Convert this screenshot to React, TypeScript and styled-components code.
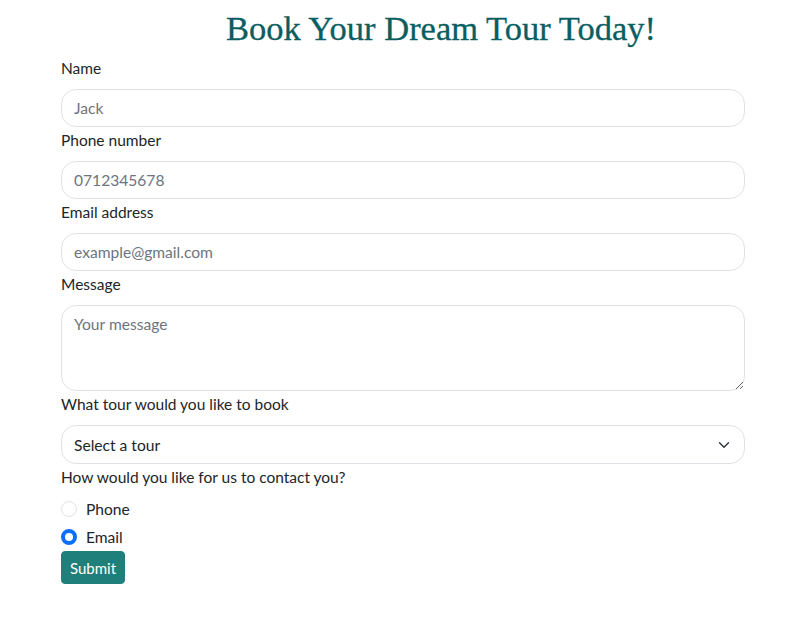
import React from "react";
import styled, { createGlobalStyle } from "styled-components";

const Global = createGlobalStyle`
  body {
    margin: 8px;
    background: #ffffff;
    font-family: Lato, "Noto Sans", sans-serif;
    color: #212529;
  }
  * { box-sizing: border-box; }
`;

const Page = styled.div`
  display: flex;
  flex-direction: column;
`;

const Title = styled.h1`
  margin: 0;
  padding-left: 91px;
  text-align: center;
  font-family: "Liberation Serif", "DejaVu Serif", serif;
  font-weight: 400;
  font-size: 34.5px;
  line-height: 40px;
  color: #0b5e5f;
  -webkit-text-stroke: 0.3px #0b5e5f;
`;

const Form = styled.form`
  margin: 8px 0 0 53px;
  width: 684px;
  display: flex;
  flex-direction: column;
`;

const Field = styled.div`
  display: flex;
  flex-direction: column;
  margin-bottom: 1px;
`;

const Label = styled.label`
  font-size: 15.5px;
  line-height: 24px;
  margin-bottom: 9px;
`;

const inputBase = `
  width: 100%;
  font-family: Lato, "Noto Sans", sans-serif;
  font-size: 15.6px;
  line-height: 24px;
  color: #212529;
  background: #fff;
  border: 1px solid #dee2e6;
  border-radius: 15px;
  padding: 6px 12px;
  outline: none;
  &::placeholder { color: #6c757d; opacity: 1; }
`;

const Input = styled.input`
  ${inputBase}
  height: 38px;
`;

const TextArea = styled.textarea`
  ${inputBase}
  height: 86px;
  resize: vertical;
  display: block;
`;

const Select = styled.select`
  ${inputBase}
  height: 39px;
  appearance: none;
  padding-right: 36px;
  background-image: url("data:image/svg+xml,%3csvg xmlns='http://www.w3.org/2000/svg' viewBox='0 0 16 16'%3e%3cpath fill='none' stroke='%23343a40' stroke-linecap='round' stroke-linejoin='round' stroke-width='2' d='m2 5 6 6 6-6'/%3e%3c/svg%3e");
  background-repeat: no-repeat;
  background-position: right 12px center;
  background-size: 16px 12px;
`;

const RadioGroup = styled.div`
  display: flex;
  flex-direction: column;
  gap: 4px;
  margin-top: -1px;
`;

const RadioRow = styled.label`
  display: flex;
  align-items: center;
  gap: 9px;
  font-size: 15.6px;
  line-height: 24px;
  cursor: pointer;
`;

const RadioDot = styled.span<{ $checked?: boolean }>`
  width: 16px;
  height: 16px;
  border-radius: 50%;
  flex: none;
  border: ${(p) => (p.$checked ? "4px solid #0d6efd" : "1px solid #dee2e6")};
  background: #fff;
`;

const Submit = styled.button`
  align-self: flex-start;
  margin-top: 1px;
  height: 33px;
  padding: 0 8px;
  background: #1f7f7b;
  color: #fff;
  border: 1px solid #1f7f7b;
  border-radius: 4px;
  font-family: Lato, "Noto Sans", sans-serif;
  font-size: 15px;
  cursor: pointer;
`;

export default function App() {
  const [contact, setContact] = React.useState("email");
  return (
    <Page>
      <Global />
      <Title>Book Your Dream Tour Today!</Title>
      <Form onSubmit={(e) => e.preventDefault()}>
        <Field>
          <Label>Name</Label>
          <Input placeholder="Jack" />
        </Field>
        <Field>
          <Label>Phone number</Label>
          <Input placeholder="0712345678" />
        </Field>
        <Field>
          <Label>Email address</Label>
          <Input placeholder="example@gmail.com" />
        </Field>
        <Field>
          <Label>Message</Label>
          <TextArea placeholder="Your message" />
        </Field>
        <Field>
          <Label>What tour would you like to book</Label>
          <Select defaultValue="">
            <option value="">Select a tour</option>
          </Select>
        </Field>
        <Field>
          <Label>How would you like for us to contact you?</Label>
          <RadioGroup>
            <RadioRow onClick={() => setContact("phone")}>
              <RadioDot $checked={contact === "phone"} />
              Phone
            </RadioRow>
            <RadioRow onClick={() => setContact("email")}>
              <RadioDot $checked={contact === "email"} />
              Email
            </RadioRow>
          </RadioGroup>
        </Field>
        <Submit type="submit">Submit</Submit>
      </Form>
    </Page>
  );
}
